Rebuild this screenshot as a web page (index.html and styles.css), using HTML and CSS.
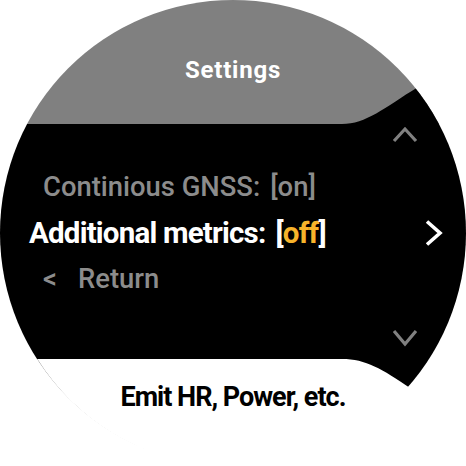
FILE: index.html
```html
<!DOCTYPE html>
<html>
<head>
<meta charset="utf-8">
<link rel="stylesheet" href="styles.css">
</head>
<body>
<div class="watch">
  <header class="header"><h1 class="title">Settings</h1></header>
  <main class="menu">
    <div class="row row-dim">Continious GNSS:<span class="gap">[on]</span></div>
    <div class="row row-sel">Additional metrics:<span class="gap">[<span class="val">off</span>]</span></div>
    <div class="row row-dim"><span class="back">&lt;</span>Return</div>
  </main>
  <footer class="footer"><p class="hint">Emit HR, Power, etc.</p></footer>
  <svg class="shapes" width="466" height="466" viewBox="0 0 466 466">
    <path d="M330 124 L342 124 C366 124 384 108 418 87 L466 58 L466 124 Z" fill="#000"/>
    <path d="M330 359 L342 359 C366 359 382 369 410 388 L466 424 L466 359 Z" fill="#000"/>
    <path d="M37 359 A232.5 232.5 0 0 0 409 388" fill="none" stroke="#9a9a9a" stroke-width="1"/>
  </svg>
  <svg class="chev chev-up" width="28" height="20" viewBox="0 0 28 20"><path d="M3 17 L14 5 L25 17" fill="none" stroke="#808080" stroke-width="3.2"/></svg>
  <svg class="chev chev-right" width="22" height="28" viewBox="0 0 22 28"><path d="M4 2.5 L17 14 L4 25.5" fill="none" stroke="#fff" stroke-width="3.6"/></svg>
  <svg class="chev chev-down" width="28" height="22" viewBox="0 0 28 22"><path d="M3 4 L14 17 L25 4" fill="none" stroke="#808080" stroke-width="3.2"/></svg>
</div>
</body>
</html>
```
FILE: styles.css
```css
html, body {
  margin: 0;
  padding: 0;
  background: #fff;
}
body {
  width: 466px;
  height: 466px;
  overflow: hidden;
  font-family: Roboto, "Liberation Sans", sans-serif;
}
.watch {
  position: relative;
  width: 466px;
  height: 466px;
  border-radius: 50%;
  overflow: hidden;
  display: flex;
  flex-direction: column;
}
.header {
  height: 124px;
  background: #808080;
  box-sizing: border-box;
  padding-top: 55px;
  display: flex;
  justify-content: center;
}
.title {
  margin: 0;
  font-size: 24px;
  line-height: 30px;
  font-weight: 700;
  letter-spacing: 0.8px;
  color: #fff;
}
.menu {
  height: 235px;
  background: #000;
  box-sizing: border-box;
  padding-top: 40px;
  display: flex;
  flex-direction: column;
}
.row {
  height: 46px;
  line-height: 46px;
  white-space: nowrap;
}
.row-dim {
  font-size: 27.4px;
  font-weight: 500;
  color: #8c8c8c;
  padding-left: 43px;
}
.row-sel {
  font-size: 29.5px;
  font-weight: 700;
  letter-spacing: -0.8px;
  color: #fff;
  padding-left: 29px;
}
.gap {
  margin-left: 10px;
}
.val {
  color: #f7b32b;
}
.back {
  display: inline-block;
  width: 35px;
}
.footer {
  flex: 1;
  background: #fff;
  box-sizing: border-box;
  padding-top: 21px;
  display: flex;
  justify-content: center;
}
.hint {
  margin: 0;
  font-size: 27px;
  line-height: 34px;
  font-weight: 700;
  letter-spacing: -1px;
  color: #000;
}
.shapes {
  position: absolute;
  left: 0;
  top: 0;
  pointer-events: none;
}
.chev {
  position: absolute;
}
.chev-up {
  left: 391px;
  top: 124px;
}
.chev-right {
  left: 423px;
  top: 219px;
}
.chev-down {
  left: 391px;
  top: 327px;
}
```
